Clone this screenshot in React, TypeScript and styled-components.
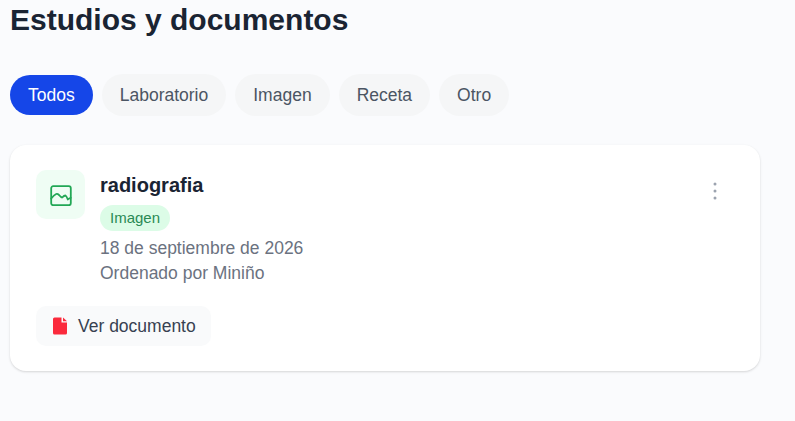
import React from "react";
import styled, { createGlobalStyle } from "styled-components";

const Global = createGlobalStyle`
  html, body { margin: 0; padding: 0; background: #fafbfd; }
  body { font-family: "Liberation Sans", Arial, sans-serif; }
`;
const Page = styled.main`
  width: 795px;
  height: 421px;
  box-sizing: border-box;
  padding: 0 35px 0 10px;
  overflow: hidden;
`;
const Title = styled.h1`
  margin: 0;
  height: 40px;
  line-height: 40px;
  font-size: 30px;
  font-weight: 700;
  color: #1a2433;
`;
const Tabs = styled.nav`
  display: flex;
  align-items: center;
  gap: 9px;
  margin-top: 34px;
  height: 42px;
`;
const Tab = styled.button<{ $active?: boolean }>`
  height: ${(p) => (p.$active ? "40px" : "42px")};
  padding: 0 18px;
  border: 0;
  border-radius: 21px;
  font: 400 17.5px "Liberation Sans", Arial, sans-serif;
  color: ${(p) => (p.$active ? "#ffffff" : "#4b5563")};
  background: ${(p) => (p.$active ? "#1546e8" : "#f5f6f7")};
`;
const Card = styled.article`
  margin-top: 29px;
  height: 226px;
  box-sizing: border-box;
  padding: 25px 26px;
  background: #fff;
  border-radius: 16px;
  box-shadow: 0 1px 3px rgba(0, 0, 0, 0.1), 0 1px 2px rgba(0, 0, 0, 0.06);
`;
const Top = styled.div`
  display: flex;
  gap: 15px;
`;
const IconBox = styled.div`
  width: 49px;
  height: 49px;
  border-radius: 10px;
  background: #effdf4;
  display: flex;
  align-items: center;
  justify-content: center;
  color: #22a755;
`;
const Info = styled.div`
  flex: 1;
  display: flex;
  flex-direction: column;
  align-items: flex-start;
`;
const Name = styled.h2`
  margin: 0;
  height: 30px;
  line-height: 30px;
  font-size: 20px;
  font-weight: 700;
  color: #1a2433;
`;
const Badge = styled.span`
  margin-top: 5px;
  height: 26px;
  line-height: 26px;
  padding: 0 10px;
  border-radius: 13px;
  background: #dcfce7;
  color: #2a8a55;
  font-size: 15px;
`;
const Meta = styled.p`
  margin: 0;
  height: 25px;
  line-height: 25px;
  font-size: 17.5px;
  color: #6b7280;
`;
const Dates = styled.div`
  margin-top: 5px;
`;
const More = styled.button`
  width: 30px;
  height: 30px;
  padding: 0;
  margin: 6px 4px 0 0;
  border: 0;
  background: none;
  color: #9ca3af;
  display: flex;
  align-items: center;
  justify-content: center;
`;
const DocButton = styled.button`
  margin-top: 20px;
  height: 40px;
  padding: 0 15px 0 17px;
  display: flex;
  align-items: center;
  gap: 11px;
  border: 0;
  border-radius: 10px;
  background: #f9fafb;
  color: #374151;
  font: 400 17.5px "Liberation Sans", Arial, sans-serif;
`;

export default function App() {
  return (
    <Page>
      <Global />
      <Title>Estudios y documentos</Title>
      <Tabs>
        <Tab $active>Todos</Tab>
        <Tab>Laboratorio</Tab>
        <Tab>Imagen</Tab>
        <Tab>Receta</Tab>
        <Tab>Otro</Tab>
      </Tabs>
      <Card>
        <Top>
          <IconBox>
            <svg width="22" height="22" viewBox="0 0 22 22" fill="none" stroke="currentColor" strokeWidth="1.8" strokeLinejoin="round" strokeLinecap="round">
              <rect x="1.2" y="2.2" width="19.6" height="19" rx="2" />
              <path d="M1.2 14.5 Q4 11 6.2 10 Q7.5 9.5 9 11 Q11 13.5 12.2 13.5 Q14 11.5 15.5 11.5 Q16.5 12 17.8 15.5 Q19 14 20.8 13.8" />
            </svg>
          </IconBox>
          <Info>
            <Name>radiografia</Name>
            <Badge>Imagen</Badge>
            <Dates>
              <Meta>18 de septiembre de 2026</Meta>
              <Meta>Ordenado por Miniño</Meta>
            </Dates>
          </Info>
          <More aria-label="Más opciones">
            <svg width="4" height="18" viewBox="0 0 4 18" fill="currentColor">
              <circle cx="2" cy="2" r="1.5" />
              <circle cx="2" cy="9" r="1.5" />
              <circle cx="2" cy="16" r="1.5" />
            </svg>
          </More>
        </Top>
        <DocButton>
          <svg width="14" height="18" viewBox="0 0 14 18" fill="#fb2a3c">
            <path d="M1.5 0.5 H8.5 V5.5 H14 V16 A1.5 1.5 0 0 1 12.5 17.5 H1.5 A1.5 1.5 0 0 1 0 16 V2 A1.5 1.5 0 0 1 1.5 0.5 Z" />
            <path d="M10 0.5 L14 4.2 H10 Z" />
          </svg>
          Ver documento
        </DocButton>
      </Card>
    </Page>
  );
}
